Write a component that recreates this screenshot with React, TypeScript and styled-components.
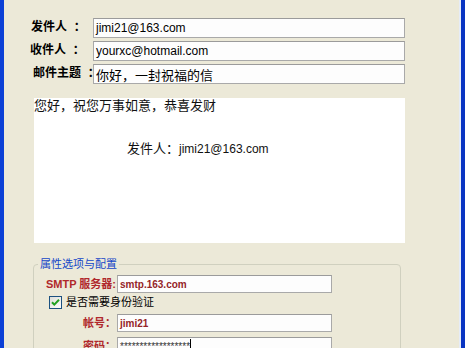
import React from "react";
import styled, { createGlobalStyle } from "styled-components";

const Global = createGlobalStyle`
  html, body { margin: 0; padding: 0; background: #ece9d8; }
  body { font-family: "Liberation Sans", "Noto Sans CJK SC", sans-serif; }
`;

const Window = styled.div`
  width: 465px;
  height: 348px;
  box-sizing: border-box;
  overflow: hidden;
  background: #ece9d8;
  border-left: 4px solid #0c40d6;
  border-right: 4px solid #0934c2;
  display: flex;
`;

const Client = styled.div`
  flex: 1;
  border-right: 2px solid #e6ecf7;
  display: flex;
  flex-direction: column;
  align-items: flex-start;
  & > * { flex-shrink: 0; }
`;

const HeaderForm = styled.div`
  display: grid;
  grid-template-columns: 89px 312px;
  row-gap: 3px;
  margin-top: 18px;
`;

const HeadLabel = styled.div<{ $indent: number }>`
  padding-left: ${(p) => p.$indent}px;
  padding-top: 2px;
  font-weight: bold;
  font-size: 12px;
  line-height: 14px;
  color: #000;
  white-space: pre;
`;

const TextBox = styled.div<{ $h?: number; $size?: number }>`
  height: ${(p) => p.$h ?? 20}px;
  box-sizing: border-box;
  border: 1px solid #a9a9a9;
  border-top-color: #9b9b9b;
  background: #fdfdfd;
  padding: 0 2px;
  display: flex;
  align-items: center;
  font-size: ${(p) => p.$size ?? 12}px;
  color: #000;
  white-space: nowrap;
  overflow: hidden;
`;

const MessageArea = styled.div`
  margin: 14px 0 0 30px;
  width: 371px;
  height: 145px;
  background: #fff;
  font-size: 13px;
  line-height: 14.4px;
  color: #111;
  box-sizing: border-box;
  padding-top: 1px;
`;

const MessageLine = styled.div<{ $indent?: number; $skip?: number }>`
  padding-left: ${(p) => p.$indent ?? 0}px;
  margin-top: ${(p) => (p.$skip ?? 0) * 14.4}px;
  white-space: nowrap;
`;

const Latin = styled.span`
  font-size: 12px;
`;

const Group = styled.fieldset`
  margin: 14px 0 0 29px;
  width: 368px;
  min-width: 0;
  box-sizing: border-box;
  border: 1px solid #d0d0bf;
  border-radius: 4px;
  padding: 4px 0 20px 0;
`;

const GroupTitle = styled.legend`
  margin-left: 4px;
  padding: 0 2px;
  font-size: 11px;
  line-height: 14px;
  color: #1446c8;
`;

const SettingRow = styled.div<{ $mt: number }>`
  display: grid;
  grid-template-columns: 83px 215px;
  align-items: center;
  margin-top: ${(p) => p.$mt}px;
`;

const SettingLabel = styled.div`
  text-align: right;
  padding-right: 1px;
  font-weight: bold;
  font-size: 11px;
  line-height: 13px;
  color: #b0282c;
  white-space: nowrap;
`;

const ValueText = styled.span`
  font-weight: bold;
  font-size: 10px;
  color: #952428;
`;

const Mask = styled.span`
  font-size: 10px;
  color: #333;
`;

const Caret = styled.span`
  display: inline-block;
  width: 1px;
  height: 15px;
  background: #000;
`;

const CheckRow = styled.label<{ $mt: number }>`
  display: flex;
  align-items: center;
  gap: 4px;
  padding-left: 15px;
  margin-top: ${(p) => p.$mt}px;
  height: 13px;
  font-size: 11px;
  line-height: 13px;
  color: #000;
`;

const CheckBox = () => (
  <svg width="13" height="13" viewBox="0 0 13 13">
    <defs>
      <linearGradient id="cbg" x1="0" y1="0" x2="1" y2="1">
        <stop offset="0" stopColor="#dcdcd6" />
        <stop offset="1" stopColor="#ffffff" />
      </linearGradient>
    </defs>
    <rect x="0.5" y="0.5" width="12" height="12" fill="url(#cbg)" stroke="#1c5180" />
    <path d="M3 6.2 L5.3 8.6 L10 3.8" fill="none" stroke="#21a121" strokeWidth="2" />
  </svg>
);

export default function App() {
  return (
    <>
      <Global />
      <Window>
        <Client>
          <HeaderForm>
            <HeadLabel $indent={27}>发件人  ：</HeadLabel>
            <TextBox>jimi21@163.com</TextBox>
            <HeadLabel $indent={26}>收件人  ：</HeadLabel>
            <TextBox>yourxc@hotmail.com</TextBox>
            <HeadLabel $indent={29}>邮件主题  ：</HeadLabel>
            <TextBox $size={13}>你好，一封祝福的信</TextBox>
          </HeaderForm>

          <MessageArea>
            <MessageLine>您好，祝您万事如意，恭喜发财</MessageLine>
            <MessageLine $indent={93} $skip={2}>
              发件人：<Latin>jimi21@163.com</Latin>
            </MessageLine>
          </MessageArea>

          <Group>
            <GroupTitle>属性选项与配置</GroupTitle>
            <SettingRow $mt={0}>
              <SettingLabel>SMTP 服务器:</SettingLabel>
              <TextBox $h={18}>
                <ValueText>smtp.163.com</ValueText>
              </TextBox>
            </SettingRow>
            <CheckRow $mt={3}>
              <CheckBox />
              是否需要身份验证
            </CheckRow>
            <SettingRow $mt={5}>
              <SettingLabel>帐号：</SettingLabel>
              <TextBox $h={18}>
                <ValueText>jimi21</ValueText>
              </TextBox>
            </SettingRow>
            <SettingRow $mt={5}>
              <SettingLabel>密码：</SettingLabel>
              <TextBox $h={18}>
                <Mask>******************</Mask>
                <Caret />
              </TextBox>
            </SettingRow>
          </Group>
        </Client>
      </Window>
    </>
  );
}
